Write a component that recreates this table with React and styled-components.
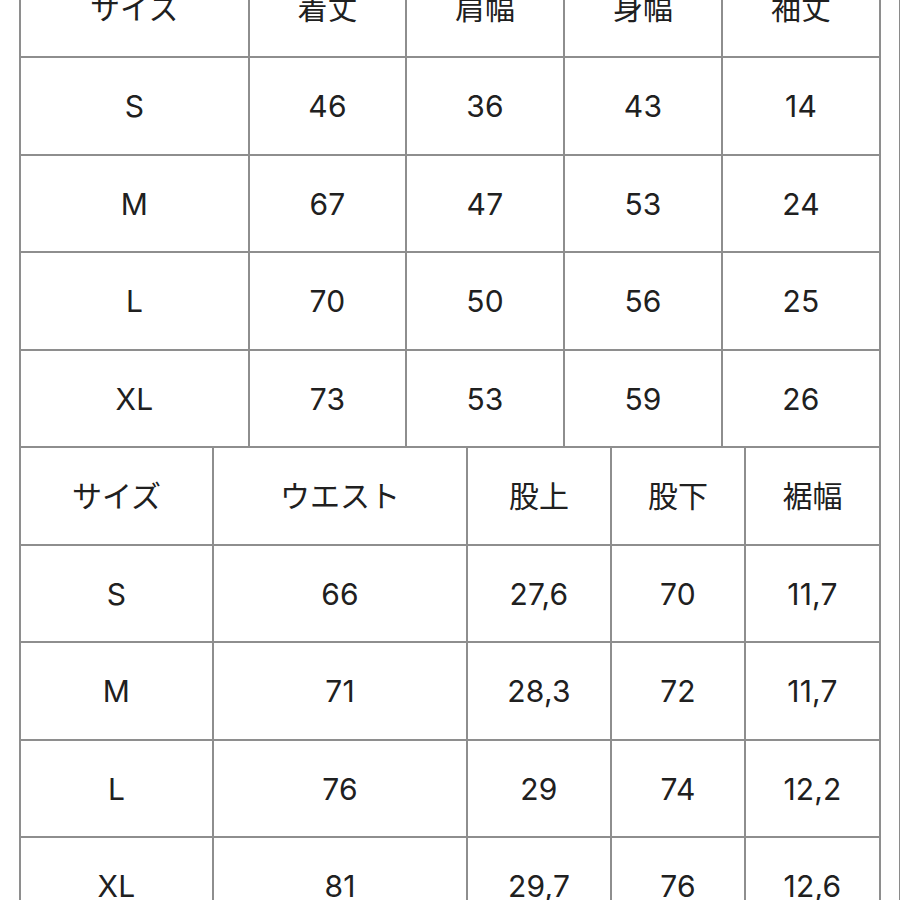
import React from "react";
import styled, { createGlobalStyle } from "styled-components";

const GlobalStyle = createGlobalStyle`
  html, body {
    margin: 0;
    padding: 0;
    background: #ffffff;
    overflow: hidden;
  }
  * {
    box-sizing: border-box;
  }
`;

const Page = styled.div`
  width: 900px;
  height: 900px;
  overflow: hidden;
  border-right: 1px solid #8a8a8a;
  padding-left: 19px;
  font-family: Inter, "Noto Sans CJK JP", sans-serif;
  color: #202020;
`;

const Sheet = styled.div`
  width: 862px;
  margin-top: -39.5px;
  display: flex;
  flex-direction: column;
`;

const Table = styled.div`
  display: grid;
  grid-template-columns: ${({ cols }) => cols};
  grid-auto-rows: 97.5px;
  border-left: 2px solid #8e8e8e;
`;

const Cell = styled.div`
  display: flex;
  align-items: center;
  justify-content: center;
  border-right: 2px solid #8e8e8e;
  border-bottom: 2px solid #8e8e8e;
  font-size: 30px;
  font-weight: 400;
  line-height: 1;
  padding-top: ${({ head }) => (head ? "0" : "1px")};
  letter-spacing: ${({ head }) => (head ? "0" : "0.2px")};
`;

const tops = {
  cols: "229px 157px 158px 158px 158px",
  rows: [
    ["サイズ", "着丈", "肩幅", "身幅", "袖丈"],
    ["S", "46", "36", "43", "14"],
    ["M", "67", "47", "53", "24"],
    ["L", "70", "50", "56", "25"],
    ["XL", "73", "53", "59", "26"],
  ],
};

const bottoms = {
  cols: "193px 254px 144px 134px 135px",
  rows: [
    ["サイズ", "ウエスト", "股上", "股下", "裾幅"],
    ["S", "66", "27,6", "70", "11,7"],
    ["M", "71", "28,3", "72", "11,7"],
    ["L", "76", "29", "74", "12,2"],
    ["XL", "81", "29,7", "76", "12,6"],
  ],
};

const SizeTable = ({ data }) => (
  <Table cols={data.cols}>
    {data.rows.map((row, r) =>
      row.map((v, c) => (
        <Cell key={`${r}-${c}`} head={r === 0}>
          {v}
        </Cell>
      ))
    )}
  </Table>
);

export default function App() {
  return (
    <Page>
      <GlobalStyle />
      <Sheet>
        <SizeTable data={tops} />
        <SizeTable data={bottoms} />
      </Sheet>
    </Page>
  );
}
